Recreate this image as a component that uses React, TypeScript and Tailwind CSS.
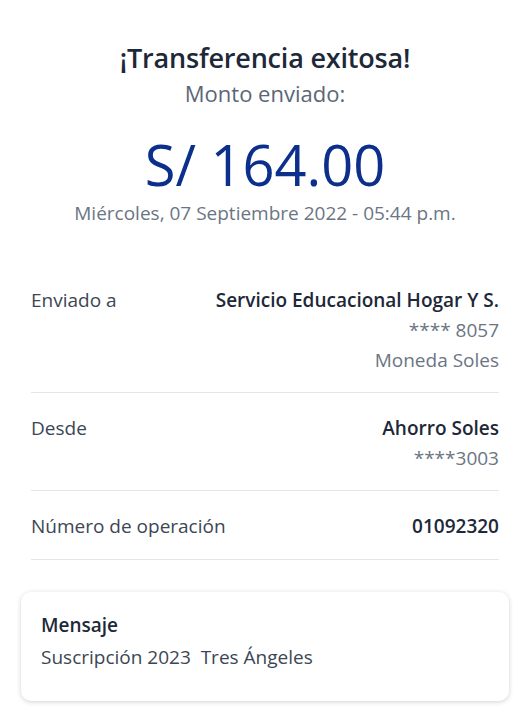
export default function App() {
  return (
    <div className="min-h-[720px] bg-white font-['Open_Sans',sans-serif] text-[#1d2838]">
      <div className="flex flex-col items-center pt-[41px]">
        <h1 className="text-[27px] leading-[34px] font-semibold tracking-[-0.2px]">¡Transferencia exitosa!</h1>
        <p className="mt-[4px] text-[22px] leading-[28px] text-[#5b6676]">Monto enviado:</p>
        <p className="mt-[24px] text-[56px] leading-[66px] text-[#0d2f8c]">S/ 164.00</p>
        <p className="mt-[4px] text-[19px] leading-[24px] text-[#6b7583]">Miércoles, 07 Septiembre 2022 - 05:44 p.m.</p>
      </div>

      <div className="mx-[31px] mt-[60px]">
        <div className="flex justify-between border-b border-[#e3e6ea] pb-[17px]">
          <span className="text-[19px] leading-[30px] text-[#3c4654]">Enviado a</span>
          <div className="flex flex-col items-end text-[19px] leading-[30px]">
            <span className="font-semibold text-[#1d2838]">Servicio Educacional Hogar Y S.</span>
            <span className="text-[#6b7583]">**** 8057</span>
            <span className="text-[#6b7583]">Moneda Soles</span>
          </div>
        </div>
        <div className="flex justify-between border-b border-[#e3e6ea] pt-[20px] pb-[17px]">
          <span className="text-[19px] leading-[30px] text-[#3c4654]">Desde</span>
          <div className="flex flex-col items-end text-[19px] leading-[30px]">
            <span className="font-semibold text-[#1d2838]">Ahorro Soles</span>
            <span className="text-[#6b7583]">****3003</span>
          </div>
        </div>
        <div className="flex justify-between border-b border-[#e3e6ea] pt-[20px] pb-[18px]">
          <span className="text-[19px] leading-[30px] text-[#3c4654]">Número de operación</span>
          <span className="text-[19px] leading-[30px] font-semibold text-[#1d2838]">01092320</span>
        </div>
      </div>

      <div className="mx-[21px] mt-[32px] rounded-[10px] bg-white px-[20px] pt-[18px] pb-[27px] shadow-[0_1px_5px_rgba(0,0,0,0.18)]">
        <p className="text-[19px] leading-[30px] font-semibold text-[#1d2838]">Mensaje</p>
        <p className="text-[19px] leading-[34px] text-[#3c4654]">Suscripción 2023&nbsp; Tres Ángeles</p>
      </div>
    </div>
  );
}
